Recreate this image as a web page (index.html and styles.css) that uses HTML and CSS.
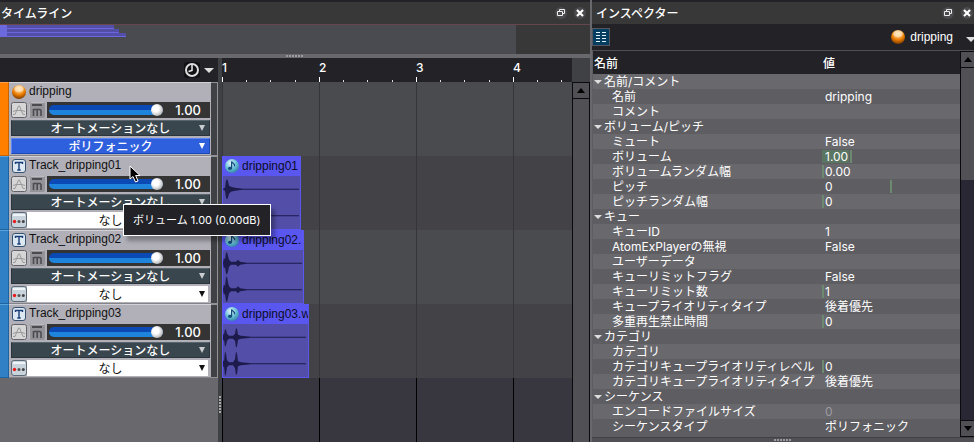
FILE: index.html
```html
<!DOCTYPE html>
<html lang="ja">
<head>
<meta charset="utf-8">
<title>タイムライン</title>
<link rel="stylesheet" href="styles.css">
</head>
<body>
<svg class="defs" aria-hidden="true">
  <defs>
    <radialGradient id="orange" cx=".5" cy=".25" r=".8"><stop offset="0" stop-color="#fff0d0"/><stop offset=".35" stop-color="#f4b060"/><stop offset=".55" stop-color="#f08000"/><stop offset="1" stop-color="#6a3000"/></radialGradient>
    <radialGradient id="aqua" cx=".4" cy=".3" r=".8"><stop offset="0" stop-color="#e8f8ff"/><stop offset=".5" stop-color="#6cc0d8"/><stop offset="1" stop-color="#247898"/></radialGradient>
    <symbol id="ball" viewBox="0 0 14 14"><circle cx="7" cy="7" r="7" fill="url(#orange)"/><ellipse cx="7" cy="4" rx="4.5" ry="3" fill="#ffe6bd" opacity=".7"/></symbol>
    <symbol id="note" viewBox="0 0 14 14"><circle cx="7" cy="7" r="7" fill="url(#aqua)"/><ellipse cx="5" cy="9.3" rx="2" ry="1.6" fill="#124a7a"/><path d="M6.6 9.3V2.5C7.4 4.6 10.4 4.4 9.6 7.4" fill="none" stroke="#124a7a" stroke-width="1.2"/></symbol>
    <symbol id="curve" viewBox="0 0 16 16"><rect x=".5" y=".5" width="15" height="15" rx="2" fill="#d6d6d6" stroke="#626268"/><path d="M2 12.5H4L7.5 4H8.5L12 12.5H14M2 9.5L5 8.5H11L14 9.5" fill="none" stroke="#9a9a9a" stroke-width="1"/></symbol>
    <symbol id="mute" viewBox="0 0 16 16"><rect width="16" height="16" rx="2" fill="#929297"/><path d="M.5 15V2L2 .5H15" fill="none" stroke="#bcbcc0"/><path d="M3 3H13" stroke="#4c4c50" stroke-width="2"/><path d="M4.5 14V7M4.5 7.5H11L12 8.5V14M8.2 8V14" fill="none" stroke="#4c4c50" stroke-width="1.6"/></symbol>
    <symbol id="dots" viewBox="0 0 16 16"><rect x=".5" y=".5" width="15" height="15" rx="2.5" fill="#c8d3dc" stroke="#5d6b78"/><path d="M2 3H14" stroke="#eef4f8" stroke-width="2"/><circle cx="3.5" cy="9.5" r="1.7" fill="#e8191b"/><circle cx="8" cy="9.5" r="1.5" fill="#555"/><circle cx="12.3" cy="9.5" r="1.5" fill="#444"/></symbol>
    <symbol id="track" viewBox="0 0 14 14"><rect x=".5" y=".5" width="13" height="13" rx="2.5" fill="#dce8f2" stroke="#34506c"/><path d="M3.5 5V3.5H10.5V5M7 3.5V11M5.3 11H8.7" fill="none" stroke="#183c78" stroke-width="1.4"/></symbol>
    <symbol id="restore" viewBox="0 0 12 12"><circle cx="6" cy="6" r="6" fill="#4b4b4f"/><path d="M4.5 4.5V2.5H9.5V6.5H7.8M2.5 4.5H7.5V8.5H2.5Z" fill="none" stroke="#eee"/></symbol>
    <symbol id="close" viewBox="0 0 12 12"><circle cx="6" cy="6" r="6" fill="#4b4b4f"/><path d="M3 3L9 9M9 3L3 9" stroke="#fff" stroke-width="2.2"/></symbol>
  </defs>
</svg>

<main class="app">
  <section class="panel">
    <header class="title"><h1>タイムライン</h1>
      <button aria-label="フロート"><svg><use href="#restore"/></svg></button><button aria-label="閉じる"><svg><use href="#close"/></svg></button>
    </header>
    <div class="overview"><div class="range"><i style="width:114px"></i><i style="width:119px"></i><i style="width:126px"></i></div><div class="rest"></div></div>
    <div class="hsplit"><b class="grip"></b></div>
    <div class="work">
      <div class="tracks">
        <div class="tools"><button aria-label="時間"><svg class="clock" viewBox="0 0 16 16"><rect width="16" height="16" rx="3" fill="#121215"/><circle cx="8" cy="8" r="6" fill="none" stroke="#ddd" stroke-width="2"/><path d="M8 3V8.5L4.5 9.5" fill="none" stroke="#eee" stroke-width="1.5"/></svg></button><button aria-label="メニュー"><span class="down"></span></button></div>
        <article class="track cue">
          <div class="strip"></div>
          <div class="body">
            <h2><svg><use href="#ball"/></svg>dripping</h2>
            <div class="level"><button aria-label="カーブ"><svg><use href="#curve"/></svg></button><button aria-label="ミュート"><svg><use href="#mute"/></svg></button><label class="volume"><input type="range" min="0" max="1" step=".01" value="1" aria-label="ボリューム"><output>1.00</output></label></div>
            <div class="pick auto"><select aria-label="オートメーション"><option>オートメーションなし</option></select></div>
            <div class="pick poly"><select aria-label="シーケンスタイプ"><option>ポリフォニック</option></select></div>
          </div><div class="edge"></div>
        </article>
        <article class="track">
          <div class="strip"></div>
          <div class="body">
            <h2><svg><use href="#track"/></svg>Track_dripping01</h2>
            <div class="level"><button aria-label="カーブ"><svg><use href="#curve"/></svg></button><button aria-label="ミュート"><svg><use href="#mute"/></svg></button><label class="volume"><input type="range" min="0" max="1" step=".01" value="1" aria-label="ボリューム"><output>1.00</output></label></div>
            <div class="pick auto"><select aria-label="オートメーション"><option>オートメーションなし</option></select></div>
            <div class="pick none"><button aria-label="設定"><svg><use href="#dots"/></svg></button><select aria-label="トラック設定"><option>なし</option></select></div>
          </div><div class="edge"></div>
        </article>
        <article class="track">
          <div class="strip"></div>
          <div class="body">
            <h2><svg><use href="#track"/></svg>Track_dripping02</h2>
            <div class="level"><button aria-label="カーブ"><svg><use href="#curve"/></svg></button><button aria-label="ミュート"><svg><use href="#mute"/></svg></button><label class="volume"><input type="range" min="0" max="1" step=".01" value="1" aria-label="ボリューム"><output>1.00</output></label></div>
            <div class="pick auto"><select aria-label="オートメーション"><option>オートメーションなし</option></select></div>
            <div class="pick none"><button aria-label="設定"><svg><use href="#dots"/></svg></button><select aria-label="トラック設定"><option>なし</option></select></div>
          </div><div class="edge"></div>
        </article>
        <article class="track">
          <div class="strip"></div>
          <div class="body">
            <h2><svg><use href="#track"/></svg>Track_dripping03</h2>
            <div class="level"><button aria-label="カーブ"><svg><use href="#curve"/></svg></button><button aria-label="ミュート"><svg><use href="#mute"/></svg></button><label class="volume"><input type="range" min="0" max="1" step=".01" value="1" aria-label="ボリューム"><output>1.00</output></label></div>
            <div class="pick auto"><select aria-label="オートメーション"><option>オートメーションなし</option></select></div>
            <div class="pick none"><button aria-label="設定"><svg><use href="#dots"/></svg></button><select aria-label="トラック設定"><option>なし</option></select></div>
          </div><div class="edge"></div>
        </article>
      </div>
      <div class="vsplit"><b class="grip"></b></div>
      <div class="stage">
        <div class="ruler"><span>1</span><span>2</span><span>3</span><span>4</span></div>
        <div class="lanes">
          <div class="lane"></div>
          <div class="lane"><div class="clip" style="width:79px"><h3><svg><use href="#note"/></svg>dripping01</h3>
            <svg class="wave" viewBox="0 0 77 54" preserveAspectRatio="none"><path d="M0 13L2 12L3 5L4 3L5 5L6 10L8 11L12 12L20 13H76V14H20L12 15L8 16L6 18L5 22L4 24L3 22L2 15L0 14ZM0 40L2 39L3 32L4 30L5 32L6 37L8 38L12 39L20 40H76V41H20L12 42L8 43L6 45L5 49L4 51L3 49L2 42L0 41Z"/></svg></div></div>
          <div class="lane"><div class="clip" style="width:82px"><h3><svg><use href="#note"/></svg>dripping02.</h3>
            <svg class="wave" viewBox="0 0 80 54" preserveAspectRatio="none"><path d="M0 13L1 8L2 10L3 3L4 2L5 6L6 10L8 12H13L15 10L17 12L24 13H79V14H24L17 15L15 17L13 15H8L6 17L5 22L4 25L3 24L2 17L1 19L0 14ZM0 40L1 35L2 37L3 28L4 27L5 33L6 37L8 39H13L15 37L17 39L24 40H79V41H24L17 42L15 44L13 42H8L6 44L5 49L4 53L3 52L2 44L1 46L0 41Z"/></svg></div></div>
          <div class="lane"><div class="clip" style="width:87px"><h3><svg><use href="#note"/></svg>dripping03.w</h3>
            <svg class="wave" viewBox="0 0 85 54" preserveAspectRatio="none"><path d="M0 10L1 11L2 5L3 6L4 10L6 12H10L12 10L13 4L14 5L15 11L18 12L28 13H83V14H28L18 15L15 16L14 23L13 24L12 17L10 15H6L4 17L3 22L2 23L1 16L0 17ZM0 37L1 38L2 28L3 30L4 37L6 39H10L12 36L13 28L14 30L15 38L18 39L28 40H83V41H28L18 42L15 43L14 51L13 52L12 45L10 42H6L4 44L3 51L2 53L1 43L0 44Z"/></svg></div></div>
        </div>
      </div>
      <div class="scroll main"><button aria-label="上へ"></button></div>
    </div>
    <svg class="pointer" viewBox="0 0 12 18"><path d="M1 1V14L4 11.5L6.5 17L9 16L6.7 10.5H11Z" fill="#000" stroke="#fff"/></svg>
    <div class="tip" role="tooltip">ボリューム 1.00 (0.00dB)</div>
  </section>

  <section class="panel inspector">
    <header class="title"><h1>インスペクター</h1>
      <button aria-label="フロート"><svg><use href="#restore"/></svg></button><button aria-label="閉じる"><svg><use href="#close"/></svg></button>
    </header>
    <div class="bar">
      <button aria-label="一覧"><svg class="list" viewBox="0 0 18 18"><rect x=".5" y=".5" width="17" height="17" fill="#063e62" stroke="#56565e"/><path d="M4 4.5H8M4 7.5H8M4 10.5H8M4 13.5H8M10 4.5H14M10 7.5H14M10 10.5H14M10 13.5H14" stroke="#e8f4fc"/></svg></button>
      <span class="target"><svg><use href="#ball"/></svg>dripping</span><button aria-label="メニュー"><span class="down"></span></button>
    </div>
    <div class="props">
      <div class="sheet">
      <table>
        <thead><tr><th>名前</th><th>値</th></tr></thead>
        <tbody>
          <tr class="group"><td>名前/コメント</td><td></td></tr>
          <tr><td>名前</td><td>dripping</td></tr>
          <tr><td>コメント</td><td></td></tr>
          <tr class="group"><td>ボリューム/ピッチ</td><td></td></tr>
          <tr><td>ミュート</td><td>False</td></tr>
          <tr><td>ボリューム</td><td class="gauge full">1.00</td></tr>
          <tr><td>ボリュームランダム幅</td><td class="gauge">0.00</td></tr>
          <tr><td>ピッチ</td><td class="gauge mid">0</td></tr>
          <tr><td>ピッチランダム幅</td><td class="gauge">0</td></tr>
          <tr class="group"><td>キュー</td><td></td></tr>
          <tr><td>キューID</td><td>1</td></tr>
          <tr><td>AtomExPlayerの無視</td><td>False</td></tr>
          <tr><td>ユーザーデータ</td><td></td></tr>
          <tr><td>キューリミットフラグ</td><td>False</td></tr>
          <tr><td>キューリミット数</td><td class="gauge">1</td></tr>
          <tr><td>キュープライオリティタイプ</td><td>後着優先</td></tr>
          <tr><td>多重再生禁止時間</td><td class="gauge">0</td></tr>
          <tr class="group"><td>カテゴリ</td><td></td></tr>
          <tr><td>カテゴリ</td><td></td></tr>
          <tr><td>カテゴリキュープライオリティレベル</td><td class="gauge">0</td></tr>
          <tr><td>カテゴリキュープライオリティタイプ</td><td>後着優先</td></tr>
          <tr class="group"><td>シーケンス</td><td></td></tr>
          <tr><td>エンコードファイルサイズ</td><td class="off">0</td></tr>
          <tr><td>シーケンスタイプ</td><td>ポリフォニック</td></tr>
        </tbody>
      </table>
      </div>
      <div class="scroll side"><button aria-label="上へ"></button><div class="thumb"></div><div class="trough"></div><button class="dn" aria-label="下へ"></button></div>
    </div>
    <footer class="foot"><b class="grip"></b></footer>
  </section>
</main>
</body>
</html>
```

FILE: styles.css
```css
* { box-sizing: border-box; }
body {
  margin: 0;
  background: #222227;
  color: #fff;
  font: 500 12px/15px Inter, "Noto Sans CJK JP", sans-serif;
}
h1, h2, h3 { margin: 0; font: inherit; }
button { padding: 0; border: 0; background: none; display: block; flex: none; }
svg { display: block; flex: none; }
.defs { position: absolute; width: 0; height: 0; }

.app {
  display: grid;
  grid-template-columns: minmax(0, 1fr) 382px;
  gap: 2px;
  height: 100vh;
  overflow: hidden;
  background: #69686d;
}
.panel {
  position: relative;
  display: flex;
  flex-direction: column;
  min-width: 0;
  min-height: 0;
  background: #222227;
  border-top: 2px solid #222227;
}
.title {
  display: flex;
  align-items: center;
  gap: 7px;
  height: 22px;
  flex: none;
  padding: 0 4px 0 1px;
  background: #383838;
}
.title h1 { flex: 1; }
.title svg { width: 12px; height: 12px; }
.inspector .title { padding: 0 1px 0 4px; }

.overview { display: flex; height: 30px; flex: none; border-top: 1px solid #66464c; background: #383838; }
.range { flex: 516; background: #4a4b50; }
.rest { flex: 74; }
.range i {
  display: block;
  height: 4px;
  border-bottom: 1px solid #6a67e0;
  background: linear-gradient(90deg, #6c69dc 7px, #534fa8 7px);
}
.hsplit { display: flex; align-items: center; justify-content: center; height: 4px; flex: none; background: #69686d; }
.grip { width: 18px; height: 2px; background: repeating-linear-gradient(90deg, #9a9a9e 0 2px, transparent 2px 3px); }

.work { display: flex; flex: 1; min-height: 0; }
.tracks { width: 218px; flex: none; background: #69686d; }
.tools { display: flex; align-items: center; justify-content: flex-end; gap: 4px; height: 24px; padding-right: 4px; background: #222227; }
.clock { width: 16px; height: 16px; }
.down { display: block; border: 5px solid transparent; border-top-color: #ddd; border-bottom: 0; }

.track { display: flex; height: 74px; color: #111; background: #b1b0b9; }
.strip { width: 9px; background: #2f80c4; border: 1px solid #1d63a0; border-left: 0; border-top-color: #5aa2dc; }
.cue .strip { background: #ff8000; border-color: #c86400; border-top-color: #ffa04a; }
.body { flex: 1; min-width: 0; display: flex; flex-direction: column; gap: 2px; padding: 0 1px 1px 2px; border-top: 1px solid #d2d1d8; border-bottom: 1px solid #858489; }
.edge { width: 7px; border: solid #929196; border-width: 1px 1px 1px 0; background: #404145; }
.track h2 { display: flex; align-items: center; gap: 3px; height: 17px; padding-left: 1px; font-family: "Liberation Sans", sans-serif; font-weight: 400; }
.track h2 svg { width: 14px; height: 14px; }
.level { display: flex; gap: 2px; height: 16px; }
.level svg { width: 16px; height: 16px; }
.volume { display: flex; align-items: center; flex: 1; min-width: 0; padding: 0 9px 0 2px; background: #343434; color: #fff; font-size: 13px; }
.volume input { width: 114px; height: 16px; margin: 0; appearance: none; background: none; }
.volume input::-webkit-slider-runnable-track { height: 10px; border-radius: 5px; background: linear-gradient(#0b4ab4 50%, #1e84dc 50%); }
.volume input::-webkit-slider-thumb { appearance: none; width: 12px; height: 12px; margin-top: -1px; border-radius: 50%; background: radial-gradient(circle at 40% 40%, #fff 30%, #ccc 60%, #777); }
.volume output { flex: 1; text-align: right; }
.pick { position: relative; display: flex; height: 16px; color: #fff; }
.pick::after { content: ""; position: absolute; right: 5px; top: 5px; border: 3px solid transparent; border-top: 6px solid currentColor; border-bottom: 0; pointer-events: none; }
.pick select { flex: 1; min-width: 0; height: 16px; padding: 0; border: 1px solid #2b343a; border-radius: 0; appearance: none; color: inherit; font: 500 12px/14px "Noto Sans CJK JP", sans-serif; text-align-last: center; }
.auto::after { color: #c9cdd0; }
.auto select { background: #3a464e; border-top-color: #59656c; }
.poly select { background: #2e60de; border-color: #5b85f4 #1c48b8 #1c48b8 #5b85f4; }
.none { color: #111; margin-right: 2px; }
.none::after { right: 3px; }
.none select { background: #fff; border: 0; padding: 0 14px 0 0; font-weight: 400; }
.none svg { width: 16px; height: 16px; }

.vsplit { width: 4px; flex: none; display: flex; align-items: center; background: #404145; }
.vsplit .grip { width: 2px; height: 18px; margin: 310px 1px 0; background: repeating-linear-gradient(#aaa 0 2px, transparent 2px 3px); }
.stage { flex: 1; min-width: 0; display: flex; flex-direction: column; overflow: hidden; }
.ruler {
  display: flex;
  height: 24px;
  flex: none;
  background: repeating-linear-gradient(90deg, #fff 0 1px, transparent 1px 97px) 0 100% / 100% 5px no-repeat, linear-gradient(#222227, #222227);
}
.ruler span {
  width: 97px;
  flex: none;
  padding-top: 2px;
  background: linear-gradient(90deg, #ddd 1px, transparent 1px) 24px 100% / 24px 2px no-repeat, linear-gradient(90deg, #ddd 1px, transparent 1px) 48px 100% / 24px 2px no-repeat, linear-gradient(90deg, #ddd 1px, transparent 1px) 73px 100% / 24px 2px no-repeat;
}
.lanes { flex: 1; background: repeating-linear-gradient(90deg, #000 0 1px, transparent 1px 97px), #383740; }
.lane { height: 74px; background: repeating-linear-gradient(90deg, #35353a 0 1px, transparent 1px 97px), #4a4b4f; }
.lane:nth-child(even) { background: repeating-linear-gradient(90deg, #35353a 0 1px, transparent 1px 97px), #434347; }
.clip { height: 74px; border: 1px solid #5a57f0; border-top: 0; background: #534fa8; overflow: hidden; }
.clip h3 { display: flex; align-items: center; gap: 3px; height: 20px; padding-left: 2px; background: #5a57f0; color: #0c0c28; font-family: "Liberation Sans", sans-serif; font-weight: 400; white-space: nowrap; }
.clip h3 svg { width: 14px; height: 14px; }
.wave { width: 100%; height: 53px; fill: #1d1a4c; }

.scroll { flex: none; display: flex; flex-direction: column; border: solid #0a0a0c; border-width: 0 1px; background: #505055; }
.scroll button { height: 17px; border: solid #0a0a0c; border-width: 1px 0; display: flex; align-items: center; justify-content: center; background: #505055; }
.scroll button::before { content: ""; border: 4px solid transparent; border-bottom: 5px solid #000; border-top: 0; }
.scroll .dn::before { border: 4px solid transparent; border-top: 5px solid #000; border-bottom: 0; }
.main { width: 18px; margin-top: 24px; box-shadow: 0 -24px #404145; }

.pointer { position: absolute; left: 129px; top: 163px; width: 12px; height: 18px; }
.tip { position: absolute; left: 123px; top: 202px; padding: 8px 9px 7px; border: 1px solid #fff; background: #222227; box-shadow: 4px 5px 4px rgba(0, 0, 0, .3); font-size: 11px; font-weight: 400; line-height: 15px; white-space: nowrap; }

.bar { display: flex; align-items: center; height: 27px; flex: none; border-bottom: 1px solid #505055; }
.list { width: 18px; height: 18px; }
.target { display: flex; align-items: center; gap: 5px; margin-left: auto; margin-right: 13px; font-family: "Liberation Sans", sans-serif; }
.target svg { width: 14px; height: 14px; }
.bar button:last-child { width: 8px; padding-top: 4px; overflow: hidden; }
.props { display: flex; flex: 1; min-height: 0; }
.sheet { flex: 1; min-width: 0; overflow: hidden; padding-left: 1px; background: #5e5d62; }
table { width: 100%; border-collapse: collapse; table-layout: fixed; }
th { height: 23px; padding: 2px 2px 0; background: #222227; text-align: left; font-weight: 500; }
th:first-child { width: 228px; padding-left: 1px; }
td { height: 15px; padding: 0 0 0 4px; white-space: nowrap; line-height: 15px; font-weight: 400; }
td:first-child { padding-left: 19px; }
tbody tr:nth-child(odd) { background: #69686d; }
.group td:first-child { padding-left: 1px; }
.group td:first-child::before { content: ""; display: inline-block; margin: 0 2px 2px 0; border: 4px solid transparent; border-top-color: #ddd; border-bottom: 0; }
.gauge { background: linear-gradient(#6b8a70, #6b8a70) 1px 1px / 2px 13px no-repeat; }
.mid { background-position-x: 69px; }
.full { background: linear-gradient(90deg, #5a7561 27px, transparent 27px 28px, #6b8a70 28px) 1px 1px / 30px 13px no-repeat; }
.off { color: #9c9ba0; }
.side { width: 14px; border-right: 0; }
.thumb { height: 112px; background: #505055; }
.trough { flex: 1; background: #282733; }
.foot { display: flex; align-items: center; justify-content: center; height: 5px; flex: none; border-top: 1px solid #404145; background: #505055; }
```
